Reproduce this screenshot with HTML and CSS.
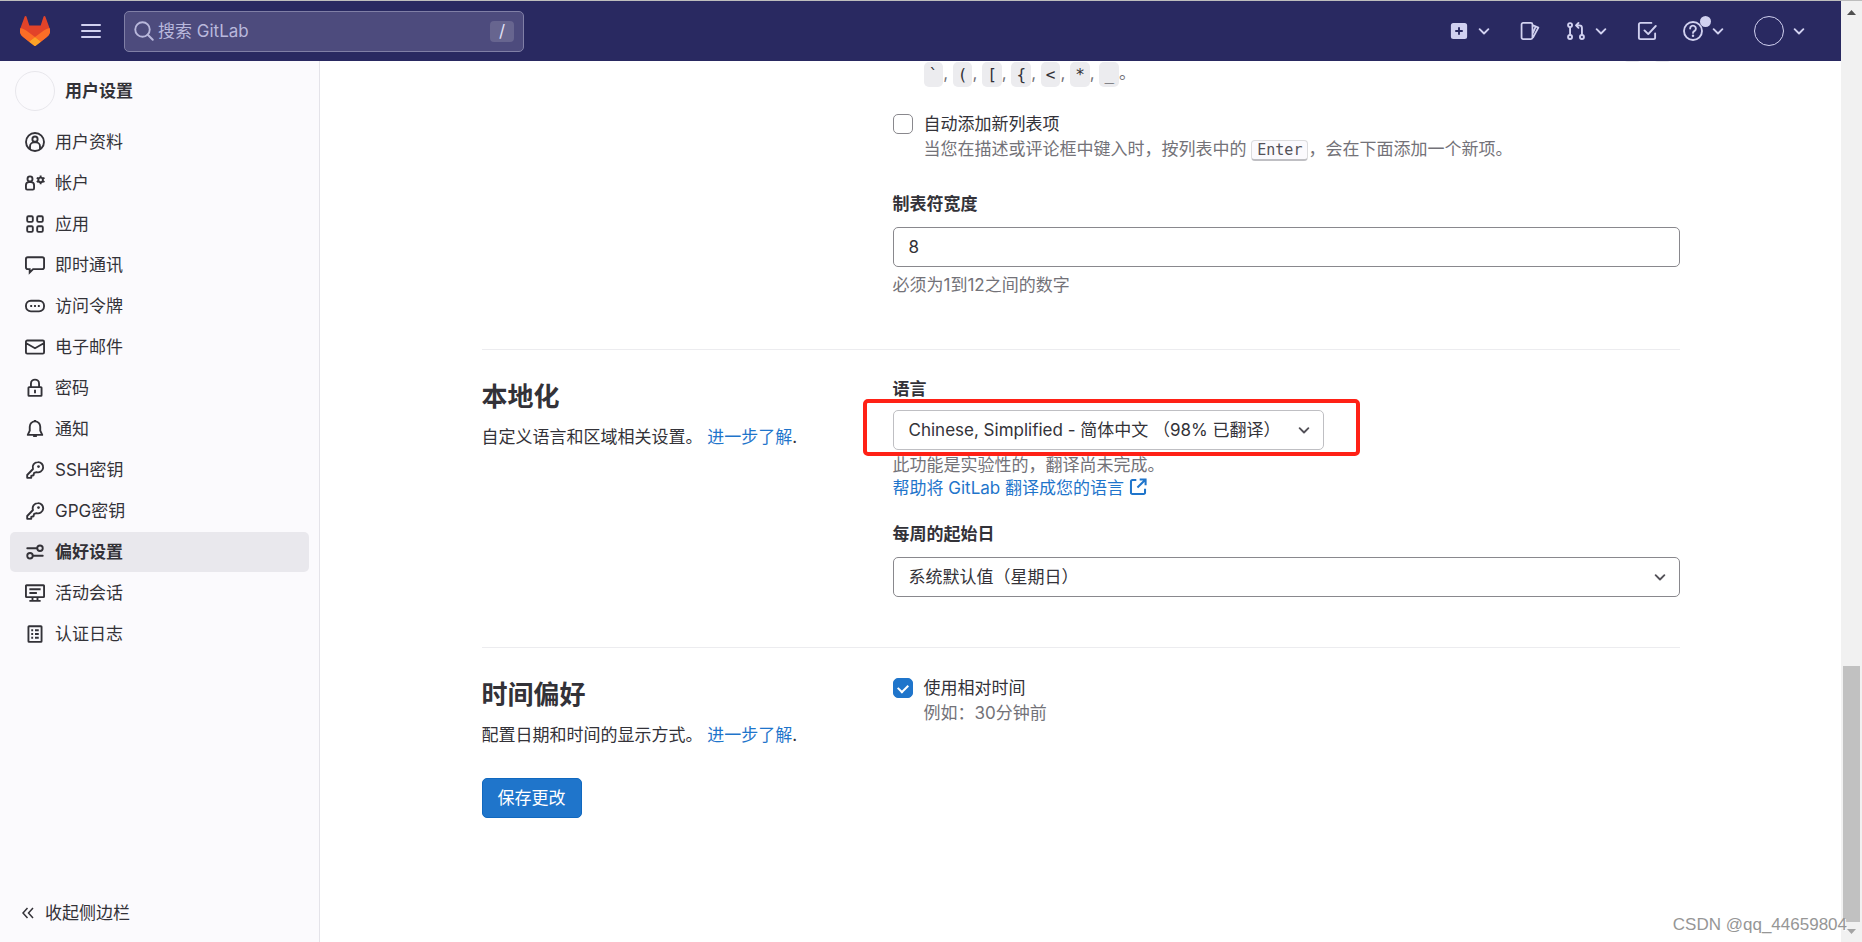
FILE: index.html
```html
<!DOCTYPE html>
<html lang="zh-CN">
<head>
<meta charset="utf-8">
<title>偏好设置 · 用户设置 · GitLab</title>
<link rel="stylesheet" href="styles.css">
</head>
<body>
<svg class="defs" aria-hidden="true">
  <symbol id="chevron" viewBox="0 0 16 16"><path d="M4.500 6.500 8 10l3.500-3.500" fill="none" stroke="currentColor" stroke-width="1.500" stroke-linecap="round" stroke-linejoin="round"/></symbol>
  <symbol id="key" viewBox="0 0 16 16"><path d="M10.200 1.700a4.100 4.100 0 1 1-1 8L7.300 10.300 6.800 12.200 5 12.700v1.550H1.750V12L6.400 7.200a4.100 4.100 0 0 1 3.800-5.500Z" fill="none" stroke="currentColor" stroke-width="1.500" stroke-linejoin="round"/><circle cx="10.800" cy="5.200" r="1.100" fill="currentColor"/></symbol>
</svg>
<div class="window">
  <header class="topbar">
    <a class="logo" href="#" aria-label="GitLab">
      <svg viewBox="0 0 30 30"><path d="m29.500 11.900-.1-.2L25.400.7a1 1 0 0 0-1.900.1L20.700 9.600H9.300L6.500.8A1 1 0 0 0 4.600.7L.6 11.700l-.1.200a7.800 7.800 0 0 0 2.600 9L15 30l11.900-9.100a7.800 7.800 0 0 0 2.600-9Z" fill="#e24329"/><path d="M29.500 11.900a14 14 0 0 0-5.700 2.500L15 21l6 4.700 5.900-4.800a7.800 7.800 0 0 0 2.600-9ZM.5 11.900a14 14 0 0 1 5.700 2.500L15 21l-6 4.700-5.900-4.800a7.800 7.800 0 0 1-2.600-9Z" fill="#fc6d26"/><path d="m9 25.700 6-4.700 6 4.700-5.200 4a1.400 1.400 0 0 1-1.600 0Z" fill="#fca326"/></svg>
    </a>
    <button class="bar-button" type="button" aria-label="菜单"><svg class="icon" viewBox="0 0 20 20"><path d="M1 4h18M1 10h18M1 16h18" stroke="currentColor" stroke-width="2" stroke-linecap="round"/></svg></button>
    <label class="search">
      <svg class="icon" viewBox="0 0 16 16"><circle cx="6.800" cy="6.800" r="5.800" fill="none" stroke="currentColor" stroke-width="1.500"/><path d="m11 11 4 4" stroke="currentColor" stroke-width="1.500" stroke-linecap="round"/></svg>
      <input type="text" placeholder="搜索 GitLab" aria-label="搜索 GitLab">
      <kbd class="slash">/</kbd>
    </label>
    <nav class="actions" aria-label="快捷操作">
      <button class="bar-button" type="button" aria-label="新建"><svg class="icon" viewBox="0 0 16 16"><path fill-rule="evenodd" d="M3.500 1.600h9a2 2 0 0 1 2 2v8.800a2 2 0 0 1-2 2h-9a2 2 0 0 1-2-2V3.600a2 2 0 0 1 2-2ZM7.250 5v2.250H5v1.500h2.250V11h1.500V8.750H11v-1.500H8.750V5Z" fill="currentColor"/></svg><svg class="icon caret"><use href="#chevron"/></svg></button>
      <button class="bar-button" type="button" aria-label="议题"><svg class="icon" viewBox="0 0 16 16"><path d="M2.500 1.500h6.200a1.250 1.250 0 0 1 1.250 1.250v10.500a1.250 1.250 0 0 1-1.250 1.250H2.500a1.250 1.250 0 0 1-1.250-1.250V2.750A1.250 1.250 0 0 1 2.500 1.500ZM10 3.300l4.700 1.900L10.300 13.500M12.500 4.500 10.200 10" fill="none" stroke="currentColor" stroke-width="1.400" stroke-linejoin="round"/></svg></button>
      <button class="bar-button" type="button" aria-label="合并请求"><svg class="icon" viewBox="0 0 16 16"><g fill="none" stroke="currentColor" stroke-width="1.500" stroke-linecap="round" stroke-linejoin="round"><circle cx="3.250" cy="3.250" r="1.600"/><circle cx="3.250" cy="12.750" r="1.600"/><circle cx="12.750" cy="12.750" r="1.600"/><path d="M3.250 5v6M12.750 11V5.500a2 2 0 0 0-2-2H8.500M10 1.500l-2 2 2 2"/></g></svg><svg class="icon caret"><use href="#chevron"/></svg></button>
      <button class="bar-button" type="button" aria-label="待办事项"><svg class="icon" viewBox="0 0 16 16"><path d="M11.500 1.500H2.750A1.250 1.250 0 0 0 1.500 2.750v10.500a1.250 1.250 0 0 0 1.250 1.250h10.500a1.250 1.250 0 0 0 1.250-1.250V10M6 7.500l3 3 6-6.500" fill="none" stroke="currentColor" stroke-width="1.500" stroke-linecap="round" stroke-linejoin="round"/></svg></button>
      <button class="bar-button help" type="button" aria-label="帮助"><svg class="icon" viewBox="0 0 16 16"><circle cx="8" cy="8" r="7.200" fill="none" stroke="currentColor" stroke-width="1.500"/><path d="M5.700 6a2.300 2.300 0 1 1 3.600 1.900C8.500 8.400 8 8.700 8 9.500" fill="none" stroke="currentColor" stroke-width="1.500" stroke-linecap="round"/><circle cx="8" cy="11.800" r="1" fill="currentColor"/></svg><span class="dot"></span><svg class="icon caret"><use href="#chevron"/></svg></button>
      <button class="bar-button user" type="button" aria-label="用户菜单"><span class="avatar small"></span><svg class="icon caret"><use href="#chevron"/></svg></button>
    </nav>
  </header>

  <aside class="sidebar">
    <a class="context" href="#"><span class="avatar"></span><span>用户设置</span></a>
    <ul class="menu">
      <li><a href="#"><svg class="icon" viewBox="0 0 16 16"><g fill="none" stroke="currentColor" stroke-width="1.500"><circle cx="8" cy="8" r="7.200"/><circle cx="8" cy="5.700" r="2.100"/><path d="M4 13.700v-2.200a3.200 3.200 0 0 1 3.200-3.200h1.600a3.200 3.200 0 0 1 3.200 3.200v2.200"/></g></svg>用户资料</a></li>
      <li><a href="#"><svg class="icon" viewBox="0 0 16 16"><g fill="none" stroke="currentColor" stroke-width="1.500"><circle cx="4" cy="4.700" r="2"/><path d="M3.200 7.300h1.600a2.450 2.450 0 0 1 2.450 2.450v2.500a1 1 0 0 1-1 1h-4.500a1 1 0 0 1-1-1v-2.500A2.450 2.450 0 0 1 3.200 7.300Z"/><circle cx="12.500" cy="5.500" r="1.800"/><path d="M12.500 2v1.500M12.500 7.500V9M9.400 3.750l1.300.75M14.300 6.500l1.300.75M15.600 3.750l-1.300.75M10.700 6.500l-1.300.75"/></g></svg>帐户</a></li>
      <li><a href="#"><svg class="icon" viewBox="0 0 16 16"><g fill="none" stroke="currentColor" stroke-width="1.500"><rect x="1.750" y="1.750" width="4.500" height="4.500" rx="1"/><rect x="9.750" y="1.750" width="4.500" height="4.500" rx="1"/><rect x="1.750" y="9.750" width="4.500" height="4.500" rx="1"/><rect x="9.750" y="9.750" width="4.500" height="4.500" rx="1"/></g></svg>应用</a></li>
      <li><a href="#"><svg class="icon" viewBox="0 0 16 16"><path d="M2.250 1.750h11.500a1.500 1.500 0 0 1 1.500 1.500v6.500a1.500 1.500 0 0 1-1.500 1.500H6.500L3.750 14v-2.750h-1.500a1.500 1.500 0 0 1-1.500-1.500v-6.500a1.500 1.500 0 0 1 1.500-1.500Z" fill="none" stroke="currentColor" stroke-width="1.500"/></svg>即时通讯</a></li>
      <li><a href="#"><svg class="icon" viewBox="0 0 16 16"><rect x=".75" y="3.750" width="14.500" height="8.500" rx="4" fill="none" stroke="currentColor" stroke-width="1.500"/><path d="M4.200 7.250h1.500v1.500H4.200ZM7.250 7.250h1.500v1.500h-1.500ZM10.300 7.250h1.500v1.500h-1.500Z" fill="currentColor"/></svg>访问令牌</a></li>
      <li><a href="#"><svg class="icon" viewBox="0 0 16 16"><path d="M1.750 2.750h12.500a1 1 0 0 1 1 1v8.500a1 1 0 0 1-1 1H1.750a1 1 0 0 1-1-1v-8.500a1 1 0 0 1 1-1ZM1 5l7 4 7-4" fill="none" stroke="currentColor" stroke-width="1.500"/></svg>电子邮件</a></li>
      <li><a href="#"><svg class="icon" viewBox="0 0 16 16"><path d="M3.250 7.250h9.500a.5.500 0 0 1 .5.500v6a.5.500 0 0 1-.5.500h-9.500a.5.500 0 0 1-.5-.5v-6a.5.500 0 0 1 .5-.5ZM4.750 7V4.500a3.250 3.250 0 0 1 6.500 0V7" fill="none" stroke="currentColor" stroke-width="1.500"/><path d="M7.250 9.300h1.500v2.900h-1.500Z" fill="currentColor"/></svg>密码</a></li>
      <li><a href="#"><svg class="icon" viewBox="0 0 16 16"><path d="M8 1.900a4.200 4.200 0 0 0-4.200 4.200v3.200L2.200 12.700h11.600l-1.600-3.400V6.100A4.200 4.200 0 0 0 8 1.900Z" fill="none" stroke="currentColor" stroke-width="1.500" stroke-linejoin="round"/><path d="M8 .7v1.500M6.500 13.500h3" stroke="currentColor" stroke-width="1.800"/></svg>通知</a></li>
      <li><a href="#"><svg class="icon"><use href="#key"/></svg>SSH密钥</a></li>
      <li><a href="#"><svg class="icon"><use href="#key"/></svg>GPG密钥</a></li>
      <li><a class="active" href="#" aria-current="page"><svg class="icon" viewBox="0 0 16 16"><g fill="none" stroke="currentColor" stroke-width="1.500" stroke-linecap="round"><circle cx="12" cy="5" r="2.200"/><circle cx="4" cy="11" r="2.200"/><path d="M1.800 5h8M6.200 11h8"/></g></svg>偏好设置</a></li>
      <li><a href="#"><svg class="icon" viewBox="0 0 16 16"><path d="M1.250 1.750h13.500a.5.500 0 0 1 .5.500v8.500a.5.500 0 0 1-.5.500H1.250a.5.500 0 0 1-.5-.5v-8.500a.5.500 0 0 1 .5-.5ZM6 11.500v2.700M10 11.500v2.700M3.500 14.250h9M3.500 5h9M3.500 8h6" fill="none" stroke="currentColor" stroke-width="1.500"/></svg>活动会话</a></li>
      <li><a href="#"><svg class="icon" viewBox="0 0 16 16"><path d="M3.250 1.750h9.500a.5.500 0 0 1 .5.500v11.500a.5.500 0 0 1-.5.500h-9.500a.5.500 0 0 1-.5-.5V2.250a.5.500 0 0 1 .5-.5ZM5 5h1.500M8 5h3M5 8h1.500M8 8h3M5 11h1.500M8 11h3" fill="none" stroke="currentColor" stroke-width="1.500"/></svg>认证日志</a></li>
    </ul>
    <button class="collapse" type="button"><svg viewBox="0 0 12 12"><path d="M5.500 1 1 6l4.500 5M11 1 6.500 6l4.500 5" fill="none" stroke="currentColor" stroke-width="1.500"/></svg>收起侧边栏</button>
  </aside>

  <main class="content">
    <form class="preferences">
      <section class="section first">
        <div class="summary"></div>
        <div class="fields">
          <div class="chips">
            <p class="chip-line end" aria-hidden="true"><code></code><code></code></p>
            <p class="chip-line"><code>`</code>, <code>(</code>, <code>[</code>, <code>{</code>, <code>&lt;</code>, <code>*</code>, <code>_</code>。</p>
          </div>
          <div class="check">
            <input type="checkbox" id="lists">
            <div>
              <label for="lists">自动添加新列表项</label>
              <p class="hint">当您在描述或评论框中键入时，按列表中的 <kbd>Enter</kbd>，会在下面添加一个新项。</p>
            </div>
          </div>
          <div class="group">
            <label for="tab-width">制表符宽度</label>
            <input class="control" type="text" id="tab-width" value="8">
            <p class="note">必须为1到12之间的数字</p>
          </div>
        </div>
      </section>
      <section class="section">
        <div class="summary">
          <h2>本地化</h2>
          <p>自定义语言和区域相关设置。 <a href="#">进一步了解</a>.</p>
        </div>
        <div class="fields">
          <div class="group compact">
            <label for="language">语言</label>
            <div class="select highlighted">
              <select class="control soft" id="language"><option>Chinese, Simplified - 简体中文 （98% 已翻译）</option></select>
              <svg class="icon caret"><use href="#chevron"/></svg>
            </div>
            <p class="note">此功能是实验性的，翻译尚未完成。<br><a href="#">帮助将 GitLab 翻译成您的语言 <svg class="external" viewBox="0 0 16 16"><path d="M6.500 1.750H3A1.250 1.250 0 0 0 1.750 3v10A1.250 1.250 0 0 0 3 14.250h10A1.250 1.250 0 0 0 14.250 13V9.500M9.500 1.250h5.250V6.500M14.500 1.500 7.500 8.500" fill="none" stroke="currentColor" stroke-width="1.800"/></svg></a></p>
          </div>
          <div class="group">
            <label for="week">每周的起始日</label>
            <div class="select">
              <select class="control" id="week"><option>系统默认值（星期日）</option></select>
              <svg class="icon caret"><use href="#chevron"/></svg>
            </div>
          </div>
        </div>
      </section>
      <section class="section last">
        <div class="summary">
          <h2>时间偏好</h2>
          <p>配置日期和时间的显示方式。 <a href="#">进一步了解</a>.</p>
        </div>
        <div class="fields">
          <div class="check">
            <input type="checkbox" id="relative" checked>
            <div>
              <label for="relative">使用相对时间</label>
              <p class="hint">例如：30分钟前</p>
            </div>
          </div>
        </div>
      </section>
      <button class="save" type="submit">保存更改</button>
    </form>
  </main>

  <div class="scrollbar" aria-hidden="true">
    <svg viewBox="0 0 9 5"><path d="M0 5 4.500 0 9 5Z" fill="#505050"/></svg>
    <span class="thumb"></span>
    <svg viewBox="0 0 9 5"><path d="M0 0h9L4.500 5Z" fill="#a3a3a3"/></svg>
  </div>
  <span class="watermark">CSDN @qq_44659804</span>
</div>
</body>
</html>
```
FILE: styles.css
```css
:root {
  --text: #333238;
  --muted: #737278;
  --link: #1f75cb;
  --navy: #292961;
  --lavender: #d1d1f0;
}

* { box-sizing: border-box; }

body,
h2,
p,
ul {
  margin: 0;
  padding: 0;
}

body,
input,
select,
button {
  font: 17px/24px Inter, "Noto Sans CJK SC", sans-serif;
  color: var(--text);
}

a { color: var(--link); text-decoration: none; }
button { cursor: pointer; }
.defs { position: absolute; width: 0; height: 0; }
.icon { width: 20px; height: 20px; flex: none; }

.window {
  position: relative;
  display: grid;
  grid-template: 60px minmax(0, 1fr) / 320px minmax(0, 1fr) 21px;
  height: 100vh;
  border-top: 1px solid #bdbdbd;
  background: #fff;
  overflow: hidden;
}

/* Top bar */
.topbar {
  grid-column: 1 / 3;
  display: flex;
  align-items: center;
  padding: 0 32px 0 20px;
  background: var(--navy);
  color: var(--lavender);
}
.logo { width: 30px; height: 30px; margin-right: 31px; }
.logo svg { display: block; }
.bar-button {
  position: relative;
  display: flex;
  align-items: center;
  padding: 0;
  border: 0;
  background: none;
  color: inherit;
}
.search {
  display: flex;
  align-items: center;
  gap: 4px;
  width: 400px;
  height: 41px;
  margin-left: 23px;
  padding: 0 9px;
  border: 1px solid #807fa6;
  border-radius: 5px;
  background: #4d4b7d;
  color: #b9b8dc;
}
.search input {
  flex: 1;
  min-width: 0;
  padding: 0;
  border: 0;
  background: none;
  color: inherit;
}
.search input::placeholder { color: inherit; opacity: 1; }
.slash {
  width: 24px;
  border-radius: 4px;
  background: #67658f;
  color: #e1e1f5;
  font: 17px/21px Inter, sans-serif;
  text-align: center;
}
.actions { display: flex; align-items: center; gap: 26px; margin-left: auto; }
.actions .caret { margin-left: 5px; }
.help .dot {
  position: absolute;
  top: -5px;
  left: 17px;
  width: 11px;
  height: 11px;
  border-radius: 50%;
  background: var(--lavender);
}
.avatar {
  width: 40px;
  height: 40px;
  border: 1px solid #e8e7ec;
  border-radius: 50%;
}
.avatar.small { width: 30px; height: 30px; border-color: var(--lavender); }

/* Sidebar */
.sidebar {
  display: flex;
  flex-direction: column;
  padding: 10px 10px 9px;
  border-right: 1px solid #e4e3e9;
  background: #fbfafd;
}
.context {
  display: flex;
  align-items: center;
  gap: 10px;
  padding-left: 5px;
  color: var(--text);
  font-weight: 600;
}
.menu {
  display: flex;
  flex-direction: column;
  gap: 1px;
  margin-top: 11px;
  list-style: none;
}
.menu a {
  display: flex;
  align-items: center;
  gap: 10px;
  height: 40px;
  padding: 0 15px;
  border-radius: 5px;
  color: var(--text);
}
.menu .active { background: #e9e8ed; font-weight: 600; }
.collapse {
  display: flex;
  align-items: center;
  gap: 11px;
  margin-top: auto;
  padding: 8px 12px;
  border: 0;
  background: none;
}
.collapse svg { width: 12px; height: 12px; }

/* Content, resting at its bottom edge */
.content {
  display: flex;
  flex-direction: column;
  justify-content: flex-end;
  align-items: center;
  padding-bottom: 124px;
  overflow: hidden;
}
.preferences { width: 100%; max-width: 1238px; padding: 0 20px; }
.section {
  display: grid;
  grid-template-columns: 411px minmax(0, 1fr);
  padding: 27px 0 50px;
  border-top: 1px solid #ececef;
}
.section.first { padding-bottom: 52px; border-top: 0; }
.section.last { padding-bottom: 31px; }
.summary h2 { margin-bottom: 8px; font-size: 26px; line-height: 40px; font-weight: 600; }
.summary p { white-space: nowrap; }
.group + .group { margin-top: 22px; }
.group > label { display: block; margin-bottom: 11px; font-weight: 600; }
.note { margin-top: 7px; color: var(--muted); line-height: 23px; }
.compact > label { margin-bottom: 9px; }
.compact > .note { margin-top: 4px; }
.external { width: 18px; height: 18px; vertical-align: -2px; }

.control {
  display: block;
  width: 100%;
  height: 40px;
  padding: 0 15px;
  border: 1px solid #89888d;
  border-radius: 5px;
  background: #fff;
  appearance: none;
}
.control.soft { padding-right: 41px; border-color: #bfbfc3; }
.select { position: relative; }
.select .caret {
  position: absolute;
  top: 10px;
  right: 10px;
  color: #535158;
  pointer-events: none;
}
.highlighted { width: fit-content; }
.highlighted::after {
  content: "";
  position: absolute;
  inset: -11px -36px -6px -30px;
  border: 4px solid #ff2116;
  border-radius: 5px;
  pointer-events: none;
}

.chips { margin-bottom: 24px; padding-left: 31px; color: var(--muted); }
.chip-line { line-height: 22px; white-space: nowrap; }
.chip-line.end { display: flex; justify-content: flex-end; gap: 11px; padding-right: 8px; }
.chip-line code {
  display: inline-block;
  min-width: 19px;
  height: 25px;
  padding: 0 5px;
  border-radius: 5px;
  background: #ececef;
  color: var(--text);
  font: 16px/25px "DejaVu Sans Mono", monospace;
  vertical-align: middle;
}
.check { display: flex; gap: 11px; }
.check label { display: block; line-height: 26px; }
.check input {
  flex: none;
  width: 20px;
  height: 20px;
  margin: 3px 0 0;
  border: 1px solid #89888d;
  border-radius: 5px;
  background: #fff;
  appearance: none;
}
.check input:checked {
  display: grid;
  place-items: center;
  border-color: var(--link);
  background: var(--link);
}
.check input:checked::before {
  content: "";
  width: 8px;
  height: 5px;
  border: solid #fff;
  border-width: 0 0 2px 2px;
  transform: translateY(-1px) rotate(-45deg);
}
.check + .group { margin-top: 30px; }
.hint { color: var(--muted); line-height: 25px; }
.hint kbd {
  padding: 0 5px;
  border: 1px solid #dcdcde;
  border-bottom: 2px solid #bfbfc3;
  border-radius: 4px;
  background: #fbfafd;
  color: #535158;
  font: 15px/18px "DejaVu Sans Mono", monospace;
}
.save {
  display: block;
  height: 40px;
  padding: 0 15px;
  border: 1px solid #1068bf;
  border-radius: 5px;
  background: var(--link);
  color: #fff;
}

/* Scrollbar */
.scrollbar {
  grid-area: 1 / 3 / 3 / 4;
  display: flex;
  flex-direction: column;
  align-items: center;
  padding: 9px 0 8px;
  background: #f1f1f1;
}
.scrollbar svg { width: 9px; height: 5px; }
.thumb { width: 17px; height: 256px; margin: auto 0 7px; background: #c1c1c1; }

.watermark {
  position: absolute;
  right: 15px;
  bottom: 5px;
  color: #969696;
  font: 17px/24px "Liberation Sans", sans-serif;
  text-shadow: 1px 1px 0 #fff;
}
```
